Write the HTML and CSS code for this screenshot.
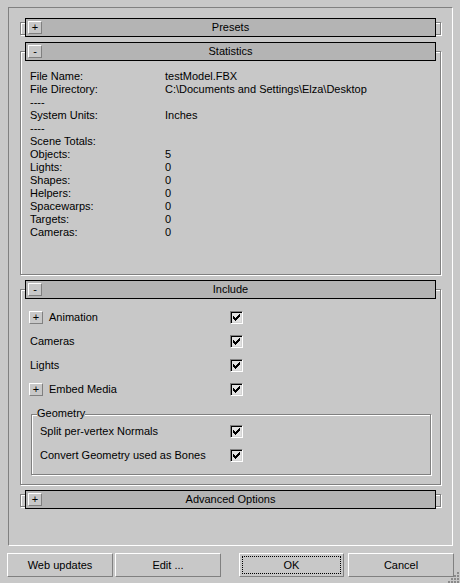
FILE: index.html
```html
<!DOCTYPE html>
<html>
<head>
<meta charset="utf-8">
<link rel="stylesheet" href="styles.css">
</head>
<body>
<div class="panel">
  <div class="rollout collapsed">
    <div class="bracket"></div>
    <div class="rhead"><span class="tbtn">+</span><span class="rtitle">Presets</span></div>
  </div>

  <div class="rollout">
    <div class="rhead"><span class="tbtn">-</span><span class="rtitle">Statistics</span></div>
    <div class="frame stats">
      <div class="kv"><span>File Name:</span><span>testModel.FBX</span></div>
      <div class="kv"><span>File Directory:</span><span>C:\Documents and Settings\Elza\Desktop</span></div>
      <div class="kv"><span>----</span></div>
      <div class="kv"><span>System Units:</span><span>Inches</span></div>
      <div class="kv"><span>----</span></div>
      <div class="kv"><span>Scene Totals:</span></div>
      <div class="kv"><span>Objects:</span><span>5</span></div>
      <div class="kv"><span>Lights:</span><span>0</span></div>
      <div class="kv"><span>Shapes:</span><span>0</span></div>
      <div class="kv"><span>Helpers:</span><span>0</span></div>
      <div class="kv"><span>Spacewarps:</span><span>0</span></div>
      <div class="kv"><span>Targets:</span><span>0</span></div>
      <div class="kv"><span>Cameras:</span><span>0</span></div>
    </div>
  </div>

  <div class="rollout">
    <div class="rhead"><span class="tbtn">-</span><span class="rtitle">Include</span></div>
    <div class="frame include">
      <div class="row">
        <span class="lbl"><span class="sbtn">+</span>Animation</span>
        <span class="cb"><svg width="7" height="7" viewBox="0 0 7 7" shape-rendering="crispEdges"><path d="M6 0h1v1h-1zM5 1h2v1h-2zM0 2h1v1h-1zM4 2h3v1h-3zM0 3h2v1h-2zM3 3h3v1h-3zM0 4h5v1h-5zM1 5h3v1h-3zM2 6h1v1h-1z"/></svg></span>
      </div>
      <div class="row">
        <span class="lbl">Cameras</span>
        <span class="cb"><svg width="7" height="7" viewBox="0 0 7 7" shape-rendering="crispEdges"><path d="M6 0h1v1h-1zM5 1h2v1h-2zM0 2h1v1h-1zM4 2h3v1h-3zM0 3h2v1h-2zM3 3h3v1h-3zM0 4h5v1h-5zM1 5h3v1h-3zM2 6h1v1h-1z"/></svg></span>
      </div>
      <div class="row">
        <span class="lbl">Lights</span>
        <span class="cb"><svg width="7" height="7" viewBox="0 0 7 7" shape-rendering="crispEdges"><path d="M6 0h1v1h-1zM5 1h2v1h-2zM0 2h1v1h-1zM4 2h3v1h-3zM0 3h2v1h-2zM3 3h3v1h-3zM0 4h5v1h-5zM1 5h3v1h-3zM2 6h1v1h-1z"/></svg></span>
      </div>
      <div class="row">
        <span class="lbl"><span class="sbtn">+</span>Embed Media</span>
        <span class="cb"><svg width="7" height="7" viewBox="0 0 7 7" shape-rendering="crispEdges"><path d="M6 0h1v1h-1zM5 1h2v1h-2zM0 2h1v1h-1zM4 2h3v1h-3zM0 3h2v1h-2zM3 3h3v1h-3zM0 4h5v1h-5zM1 5h3v1h-3zM2 6h1v1h-1z"/></svg></span>
      </div>
      <div class="group">
        <div class="glabel">Geometry</div>
        <div class="row grow">
          <span class="lbl">Split per-vertex Normals</span>
          <span class="cb"><svg width="7" height="7" viewBox="0 0 7 7" shape-rendering="crispEdges"><path d="M6 0h1v1h-1zM5 1h2v1h-2zM0 2h1v1h-1zM4 2h3v1h-3zM0 3h2v1h-2zM3 3h3v1h-3zM0 4h5v1h-5zM1 5h3v1h-3zM2 6h1v1h-1z"/></svg></span>
        </div>
        <div class="row grow">
          <span class="lbl">Convert Geometry used as Bones</span>
          <span class="cb"><svg width="7" height="7" viewBox="0 0 7 7" shape-rendering="crispEdges"><path d="M6 0h1v1h-1zM5 1h2v1h-2zM0 2h1v1h-1zM4 2h3v1h-3zM0 3h2v1h-2zM3 3h3v1h-3zM0 4h5v1h-5zM1 5h3v1h-3zM2 6h1v1h-1z"/></svg></span>
        </div>
      </div>
    </div>
  </div>

  <div class="rollout collapsed">
    <div class="bracket"></div>
    <div class="rhead"><span class="tbtn">+</span><span class="rtitle">Advanced Options</span></div>
  </div>
</div>

<div class="buttons">
  <button class="btn">Web updates</button>
  <button class="btn">Edit ...</button>
  <button class="btn ok">OK</button>
  <button class="btn cancel">Cancel</button>
</div>

<svg class="grip" width="12" height="12" viewBox="0 0 12 12" shape-rendering="crispEdges">
  <path fill="#8a8a8a" d="M9 1h2v2h-2zM6 4h2v2h-2zM9 4h2v2h-2zM3 7h2v2h-2zM6 7h2v2h-2zM9 7h2v2h-2zM0 10h2v2h-2zM3 10h2v2h-2zM6 10h2v2h-2zM9 10h2v2h-2z"/>
</svg>
</body>
</html>
```

FILE: styles.css
```css
* { box-sizing: border-box; }

html, body {
  margin: 0;
  padding: 0;
  background: #c8c8c8;
  color: #000;
  font-family: "Liberation Sans", Arial, sans-serif;
  font-size: 11px;
  line-height: 13px;
}

body {
  width: 460px;
  height: 583px;
  overflow: hidden;
  position: relative;
}

.panel {
  margin: 7px 0 0 8px;
  width: 445px;
  height: 539px;
  padding: 10px 11px 0;
  border: 1px solid;
  border-color: #808080 #fff #fff #808080;
}

.rollout {
  margin-bottom: 5px;
}

.rollout.collapsed {
  display: grid;
}

.rollout.collapsed > .bracket,
.rollout.collapsed > .rhead {
  grid-area: 1 / 1;
}

.bracket {
  align-self: start;
  margin-top: 4px;
  height: 13px;
  border: 1px solid #808080;
  box-shadow: inset 1px 1px 0 #fff, 1px 1px 0 #fff;
}

.rhead {
  position: relative;
  z-index: 1;
  margin: 0 5px;
  height: 19px;
  border: 1px solid #000;
  background: #b4b4b4;
  display: grid;
  grid-template-columns: 1fr auto 1fr;
  align-items: center;
}

.tbtn, .sbtn {
  width: 14px;
  height: 13px;
  border: 1px solid;
  border-color: #fff #808080 #808080 #fff;
  background: #c8c8c8;
  display: flex;
  align-items: center;
  justify-content: center;
  line-height: 11px;
}

.tbtn {
  justify-self: start;
  margin-left: 2px;
}

.rtitle {
  grid-column: 2;
  white-space: nowrap;
}

.frame {
  margin-top: -10px;
  border: 1px solid #808080;
  box-shadow: inset 1px 1px 0 #fff, 1px 1px 0 #fff;
}

.stats {
  height: 224px;
  padding: 18px 9px 0;
}

.kv {
  display: grid;
  grid-template-columns: 135px 1fr;
  height: 13px;
  white-space: nowrap;
}

.include {
  padding: 15px 9px 9px;
}

.row {
  display: grid;
  grid-template-columns: 200px 13px;
  align-items: center;
  height: 24px;
}

.lbl {
  display: flex;
  align-items: center;
  white-space: nowrap;
}

.sbtn {
  margin-left: -1px;
  margin-right: 6px;
}

.cb {
  width: 13px;
  height: 13px;
  border: 1px solid;
  border-color: #808080 #fff #fff #808080;
  box-shadow: inset 1px 1px 0 #000, inset -1px -1px 0 #d4d4d4;
  background: #e2e2e2;
  padding: 2px;
  display: block;
}

.cb svg {
  display: block;
}

.group {
  margin: 13px 0 0 1px;
  padding: 0 8px 7px;
  border: 1px solid #808080;
  box-shadow: inset 1px 1px 0 #fff, 1px 1px 0 #fff;
}

.glabel {
  width: max-content;
  margin: -8px 0 -1px -3px;
  background: #c8c8c8;
  height: 13px;
}

.grow {
  grid-template-columns: 190px 13px;
}

.buttons {
  display: flex;
  margin: 7px 0 0 7px;
}

.btn {
  width: 106px;
  height: 24px;
  padding: 0;
  margin: 0;
  border: 1px solid;
  border-color: #fff #808080 #808080 #fff;
  background: #c8c8c8;
  color: #000;
  font: inherit;
  line-height: 13px;
}

.btn + .btn {
  margin-left: 2px;
}

.btn.ok {
  width: 105px;
  margin-left: 18px;
  outline: 1px dotted #000;
  outline-offset: -4px;
}

.btn.cancel {
  margin-left: 4px;
}

.grip {
  position: absolute;
  right: 0;
  bottom: 0;
}
```
